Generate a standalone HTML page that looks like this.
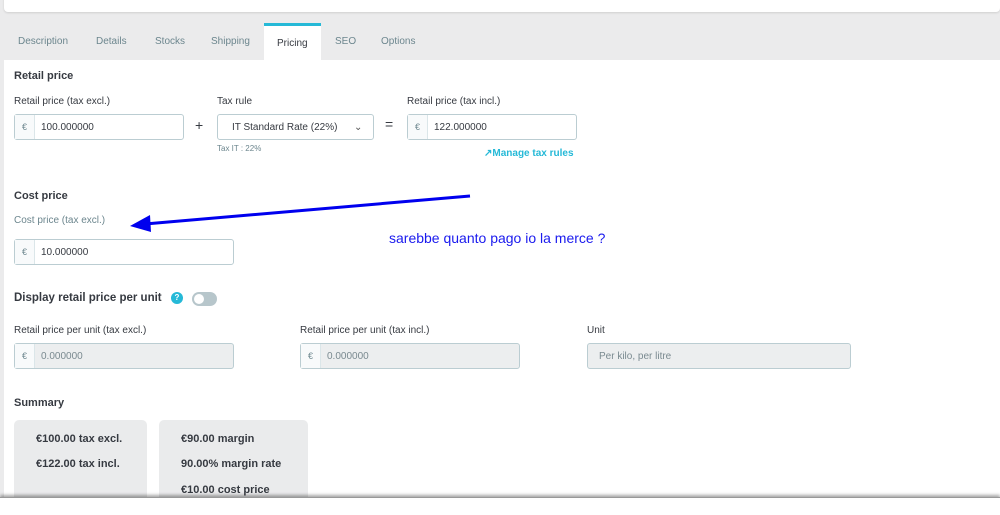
<!DOCTYPE html>
<html><head><style>
*{box-sizing:border-box;margin:0;padding:0}
body{width:1000px;height:515px;overflow:hidden;background:#ebebec;font-family:"Liberation Sans",sans-serif;color:#363a41;position:relative;font-size:10px}
.top{position:absolute;left:4px;top:-5px;width:996px;height:17px;background:#fff;border-radius:0 0 4px 4px;box-shadow:0 1px 2px rgba(0,0,0,.12)}
.tab{position:absolute;top:36px;font-size:10px;color:#6c868e}
.act{position:absolute;left:264px;top:23px;width:57px;height:38px;background:#fff;border-top:3px solid #25b9d7}
.main{position:absolute;left:4px;top:60px;width:996px;height:440px;background:#fff}
.a{position:absolute}
.h{font-weight:bold;font-size:11px;color:#363a41}
.l{font-size:10px;color:#363a41}
.inp{position:absolute;height:26px;border:1px solid #bbcdd2;border-radius:3px;background:#fff;font-size:10px}
.inp .c{position:absolute;left:0;top:0;width:20px;height:24px;border-right:1px solid #dbe6e9;background:#f8fafb;color:#6c868e;font-size:9px;line-height:24px;text-align:center}
.inp .v{position:absolute;left:26px;top:1px;line-height:24px}
.dis{background:#eceeef}
.dis .v{color:#7a8a90}
.card{position:absolute;top:420px;background:#eaebec;border-radius:5px;height:90px;font-weight:bold;font-size:11px}
.card div{position:absolute;left:22px}
</style></head><body>
<div class="top"></div>
<div class="act"></div>
<div class="tab" style="left:18px">Description</div>
<div class="tab" style="left:96px">Details</div>
<div class="tab" style="left:155px">Stocks</div>
<div class="tab" style="left:211px">Shipping</div>
<div class="tab" style="left:277px;top:38px;color:#363a41">Pricing</div>
<div class="tab" style="left:335px">SEO</div>
<div class="tab" style="left:381px">Options</div>
<div class="main"></div>
<div class="a h" style="left:14px;top:70px">Retail price</div>
<div class="a l" style="left:14px;top:96px">Retail price (tax excl.)</div>
<div class="a l" style="left:217px;top:96px">Tax rule</div>
<div class="a l" style="left:407px;top:96px">Retail price (tax incl.)</div>
<div class="inp" style="left:14px;top:114px;width:170px"><span class="c">€</span><span class="v">100.000000</span></div>
<div class="a" style="left:195px;top:117px;font-size:14px">+</div>
<div class="inp" style="left:217px;top:114px;width:157px"><span class="v" style="left:14px">IT Standard Rate (22%)</span><span class="v" style="left:136px;color:#555">&#8964;</span></div>
<div class="a" style="left:385px;top:116px;font-size:14px">=</div>
<div class="inp" style="left:407px;top:114px;width:170px"><span class="c">€</span><span class="v">122.000000</span></div>
<div class="a" style="left:217px;top:144px;font-size:8px;color:#6c868e">Tax IT : 22%</div>
<div class="a" style="left:484px;top:148px;font-size:10px;color:#25b9d7;font-weight:bold">&#x2197;Manage tax rules</div>
<div class="a h" style="left:14px;top:190px">Cost price</div>
<div class="a l" style="left:14px;top:215px;color:#6c868e">Cost price (tax excl.)</div>
<div class="inp" style="left:14px;top:239px;width:220px"><span class="c">€</span><span class="v">10.000000</span></div>
<svg class="a" style="left:0;top:0" width="1000" height="300"><line x1="470" y1="196" x2="145" y2="224" stroke="#0000ee" stroke-width="3"/><polygon points="130,226 150,215 151,232" fill="#0000ee"/></svg>
<div class="a" style="left:389px;top:230px;font-size:14px;color:#1a1aee">sarebbe quanto pago io la merce ?</div>
<div class="a h" style="left:14px;top:292px;font-size:11.5px">Display retail price per unit</div>
<div class="a" style="left:171px;top:292px;width:12px;height:12px;border-radius:50%;background:#25b9d7;color:#fff;font-size:8px;text-align:center;line-height:12px;font-weight:bold">?</div>
<div class="a" style="left:192px;top:292px;width:25px;height:14px;border-radius:7px;background:#b7c6cb"><div style="position:absolute;left:2px;top:2px;width:10px;height:10px;border-radius:50%;background:#fff"></div></div>
<div class="a l" style="left:14px;top:325px">Retail price per unit (tax excl.)</div>
<div class="a l" style="left:300px;top:325px">Retail price per unit (tax incl.)</div>
<div class="a l" style="left:587px;top:325px">Unit</div>
<div class="inp dis" style="left:14px;top:343px;width:220px"><span class="c">€</span><span class="v">0.000000</span></div>
<div class="inp dis" style="left:300px;top:343px;width:220px"><span class="c">€</span><span class="v">0.000000</span></div>
<div class="inp dis" style="left:587px;top:343px;width:264px"><span class="v" style="left:11px">Per kilo, per litre</span></div>
<div class="a h" style="left:14px;top:397px">Summary</div>
<div class="card" style="left:14px;width:133px"><div style="top:13px">€100.00 tax excl.</div><div style="top:38px">€122.00 tax incl.</div></div>
<div class="card" style="left:159px;width:149px"><div style="top:13px">€90.00 margin</div><div style="top:38px">90.00% margin rate</div><div style="top:64px">€10.00 cost price</div></div>
<div class="a" style="left:0;top:497px;width:1000px;height:18px;background:#fff;box-shadow:0 -2px 3px rgba(0,0,0,.35);border-top:1px solid #999"></div>
</body></html>
